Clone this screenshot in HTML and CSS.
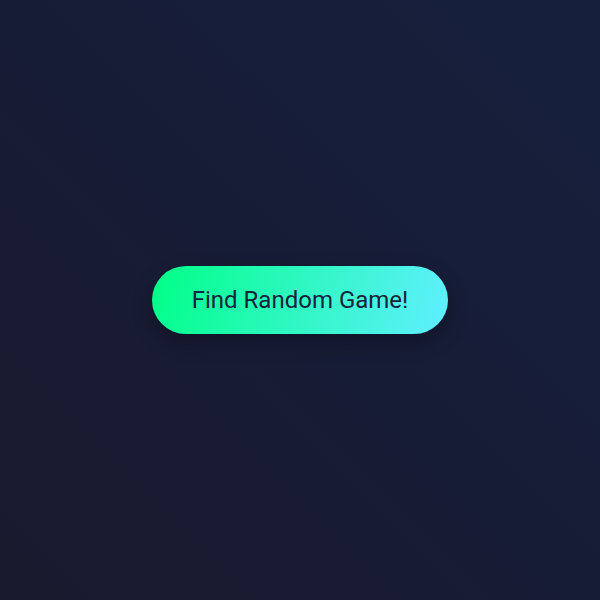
FILE: index.html
```html
<!DOCTYPE html>
<html lang="en">
<head>
  <meta charset="UTF-8" />
  <meta name="viewport" content="width=device-width, initial-scale=1.0" />
  <title>Random Game</title>
  <link rel="stylesheet" href="styles.css">
</head>
<body>
  <button class="random-btn" id="randomBtn">Find Random Game!</button>
</body>
</html>
```
FILE: styles.css
```css
* {
  box-sizing: border-box;
  margin: 0;
  padding: 0;
  font-family: 'Roboto', sans-serif;
}
body {
  min-height: 100vh;
  background: linear-gradient(to top right, #1a1a2e 0%, #171c36 50%, #16203d 100%);
  display: flex;
  align-items: center;
  justify-content: center;
}
.random-btn {
  width: 296px;
  height: 68px;
  border: none;
  border-radius: 34px;
  background: linear-gradient(105deg, #00ff87 0%, #60efff 100%);
  color: #17233a;
  font-size: 24px;
  cursor: pointer;
  box-shadow: 0 8px 20px rgba(0, 0, 0, 0.25);
}
```
